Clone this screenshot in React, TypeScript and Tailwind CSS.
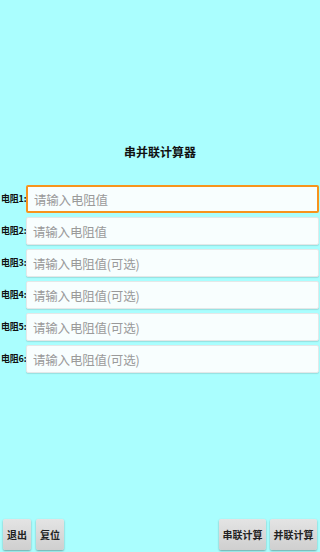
import { useState } from "react";

const FONT = '"Noto Sans CJK SC", "Noto Sans", Roboto, sans-serif';

const ROWS = [
  { label: "电阻1:", hint: "请输入电阻值" },
  { label: "电阻2:", hint: "请输入电阻值" },
  { label: "电阻3:", hint: "请输入电阻值(可选)" },
  { label: "电阻4:", hint: "请输入电阻值(可选)" },
  { label: "电阻5:", hint: "请输入电阻值(可选)" },
  { label: "电阻6:", hint: "请输入电阻值(可选)" },
];

const Btn = ({ text, w }: { text: string; w: string }) => (
  <button
    className={`${w} h-[31px] rounded-[2px] bg-gradient-to-b from-[#e4e4e4] to-[#cfcfcf] shadow-[0_1px_2px_rgba(0,0,0,0.35)] text-[10px] font-bold text-[#222] flex items-center justify-center`}
  >
    {text}
  </button>
);

export default function App() {
  const [values, setValues] = useState<string[]>(ROWS.map(() => ""));

  return (
    <div className="w-[320px] h-[552px] bg-[#aafefe] flex flex-col" style={{ fontFamily: FONT }}>
      <div className="h-[143px]" />
      <h1 className="text-center text-[12px] font-bold text-[#111] leading-[18px]">串并联计算器</h1>
      <div className="h-[24px]" />
      <div className="flex flex-col gap-[4px]">
        {ROWS.map((r, i) => (
          <div key={i} className="flex items-center h-[28px]">
            <span className="w-[26px] shrink-0 pl-[1px] text-[9px] font-bold text-[#111] whitespace-nowrap tracking-[-0.2px]">
              {r.label}
            </span>
            <input
              value={values[i]}
              onChange={(e) => {
                const v = [...values];
                v[i] = e.target.value;
                setValues(v);
              }}
              placeholder={r.hint}
              className={`flex-1 min-w-0 mr-[1px] h-[28px] px-[6px] text-[12.5px] tracking-[-0.2px] bg-[#f8fefe] outline-none rounded-[2px] placeholder:text-[#9a9a9a] ${
                i === 0
                  ? "border-2 border-[#f7941d]"
                  : "border border-[#e4e8e8] shadow-[0_1px_1px_rgba(0,0,0,0.12)]"
              }`}
            />
          </div>
        ))}
      </div>
      <div className="flex-1" />
      <div className="flex items-center px-[3px] pb-[2px] h-[33px]">
        <Btn text="退出" w="w-[28px]" />
        <div className="w-[5px]" />
        <Btn text="复位" w="w-[28px]" />
        <div className="flex-1" />
        <Btn text="串联计算" w="w-[47px]" />
        <div className="w-[4px]" />
        <Btn text="并联计算" w="w-[47px]" />
      </div>
    </div>
  );
}
